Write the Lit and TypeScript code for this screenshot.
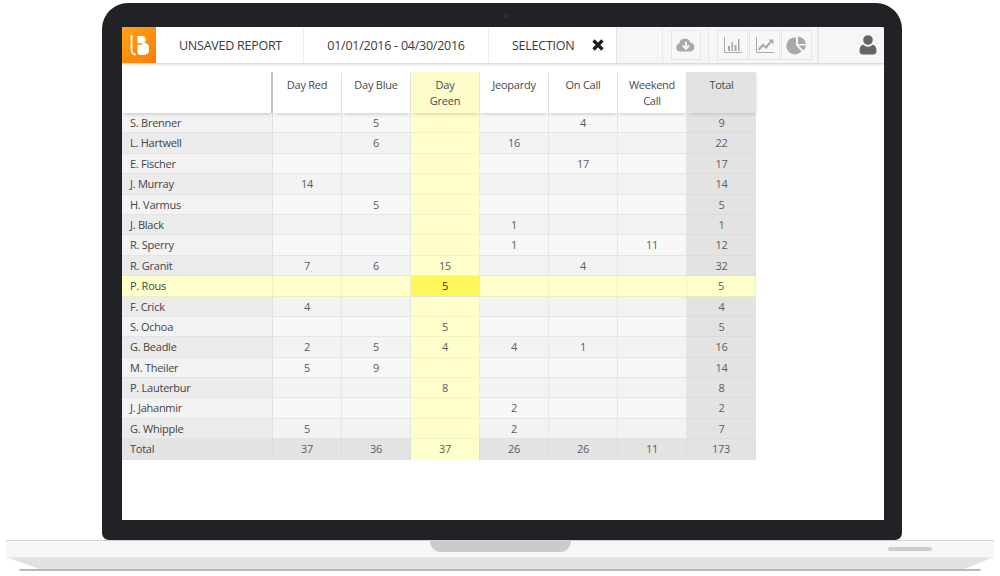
import { LitElement, html, css, svg } from "lit";
import { customElement } from "lit/decorators.js";

const COLS = ["Day Red", "Day Blue", "Day Green", "Jeopardy", "On Call", "Weekend Call"];
type Row = [string, ...(number | null)[]];
const ROWS: Row[] = [
  ["S. Brenner", null, 5, null, null, 4, null, 9],
  ["L. Hartwell", null, 6, null, 16, null, null, 22],
  ["E. Fischer", null, null, null, null, 17, null, 17],
  ["J. Murray", 14, null, null, null, null, null, 14],
  ["H. Varmus", null, 5, null, null, null, null, 5],
  ["J. Black", null, null, null, 1, null, null, 1],
  ["R. Sperry", null, null, null, 1, null, 11, 12],
  ["R. Granit", 7, 6, 15, null, 4, null, 32],
  ["P. Rous", null, null, 5, null, null, null, 5],
  ["F. Crick", 4, null, null, null, null, null, 4],
  ["S. Ochoa", null, null, 5, null, null, null, 5],
  ["G. Beadle", 2, 5, 4, 4, 1, null, 16],
  ["M. Theiler", 5, 9, null, null, null, null, 14],
  ["P. Lauterbur", null, null, 8, null, null, null, 8],
  ["J. Jahanmir", null, null, null, 2, null, null, 2],
  ["G. Whipple", 5, null, null, 2, null, null, 7],
];
const TOTALS = [37, 36, 37, 26, 26, 11, 173];

@customElement("app-root")
export class AppRoot extends LitElement {
  static styles = css`
    :host { display: block; width: 1000px; height: 576px; background: #fff; overflow: hidden;
      font-family: "Open Sans", sans-serif; color: #555; }
    .lid { box-sizing: border-box; width: 800px; height: 537px; margin: 3px 0 0 102px; background: #212226;
      border-radius: 26px 26px 7px 7px; padding: 24px 18px 20px 20px; position: relative; }
    .cam { position: absolute; left: 401px; top: 10px; width: 5px; height: 5px; border-radius: 50%; background: #2c2d32; }
    .screen { height: 493px; background: #fff; border-radius: 2px 2px 0 0; overflow: hidden; }
    .bar { display: flex; height: 36px; background: #f6f6f6; box-shadow: 0 1px 3px rgba(0,0,0,.22); position: relative; }
    .logo { width: 34px; height: 36px; background: linear-gradient(135deg, #ffa31a, #fb7d00); display: flex; align-items: center; justify-content: center; }
    .seg { display: flex; align-items: center; background: #fff; font-size: 12.5px; letter-spacing: -0.25px; color: #3a3a3a; border-right: 1px solid #ececec; box-sizing: border-box; }
    .s1 { width: 148px; padding-left: 23px; }
    .s2 { width: 185px; justify-content: center; }
    .s3 { width: 128px; padding-left: 23px; gap: 18px; border-right: 1px solid #e2e2e2; }
    .gap1 { width: 46px; border-right: 1px solid #e8e8e8; box-sizing: border-box; }
    .g2 { width: 46px; box-sizing: border-box; border-right: 1px solid #e8e8e8; display: flex; align-items: center; justify-content: center; }
    .g3 { width: 110px; box-sizing: border-box; border-right: 2px solid #e8e8e8; display: flex; align-items: center; padding-left: 8px; gap: 1px; }
    .g3 .ib { width: 31px; }
    .user { flex: 1; display: flex; align-items: center; justify-content: flex-end; padding-right: 7px; }
    .ib { width: 30px; height: 30px; box-sizing: border-box; border: 1px solid #e6e6e6; background: #f7f7f7; display: flex; align-items: center; justify-content: center; }
    .table { width: 634px; margin-top: 9px; display: grid; grid-template-columns: 151px repeat(5, 69px) 69px 69px;
      grid-template-rows: 41px repeat(17, 20.4px); font-size: 11px; letter-spacing: -0.25px; position: relative; }
    .h { background: #fff; text-align: center; padding: 5px 10px 0; line-height: 16px; box-sizing: border-box; color: #4a4a4a;
      border-right: 1px solid #e4e4e4; box-shadow: 0 3px 4px -2px rgba(0,0,0,.2); position: relative; z-index: 1; }
    .h0 { border-right: 2px solid #c6c6c6; }
    .hy { background: #fdfdcc; border-right: 1px solid #eeeec8; }
    .ht { background: #e3e3e3; border-right: 0; box-shadow: 1px 2px 4px -1px rgba(0,0,0,.16); }
    .c { box-sizing: border-box; text-align: center; line-height: 20px; border-right: 1px solid #e6e6e6; border-bottom: 1px solid #e4e4e4; background: #f8f8f8; color: #5c5c5c; }
    .odd { background: #f3f3f3; }
    .n { text-align: left; padding-left: 8px; background: #f3f3f3; color: #444; border-right-color: #e0e0e0; }
    .n.odd { background: #ebebeb; }
    .y { background: #ffffcc; border-right-color: #f0f0c8; border-bottom-color: #f3f3c8; }
    .hl { background: #ffffcc; border-right-color: #f1f1c4; border-bottom-color: #eeeec0; }
    .mark { background: #fef65a; color: #333; }
    .t { background: #e3e3e3; border-right: 0; border-bottom-color: #dcdcdc; }
    .foot { background: #e3e3e3; border-right-color: #dcdcdc; border-bottom: 0; }
    .foot.y { background: #ffffcc; }
    .base { margin: 0 6px; height: 33px; position: relative; }
    .top { height: 17px; box-sizing: border-box; background: #f5f6f8; border-top: 1px solid #d4d4d6; display: flex; justify-content: space-between; }
    .notch { width: 141px; height: 11px; margin-left: 424px; background: #cbcbcb; border-radius: 0 0 12px 12px; }
    .slot { width: 44px; height: 4px; margin: 6px 62px 0 0; border-radius: 2px; background: #cdcdcd; }
    .low { height: 12px; background: #e0e1e3; border-top: 1px solid #e9eaec; box-sizing: border-box;
      clip-path: polygon(0 0, 100% 0, 97% 100%, 3.4% 100%); }
    .sh { height: 2px; margin: 0 13px; background: #b9b9b9; border-radius: 0 0 2px 2px; }
  `;

  private ico(body: unknown, w = 22, h = 20) {
    return html`<svg width=${w} height=${h} viewBox="0 0 22 20">${body}</svg>`;
  }

  render() {
    const gray = "#a9a9a9";
    return html`
      <div class="lid">
        <div class="cam"></div>
        <div class="screen">
          <div class="bar">
            <div class="logo">
              <svg width="19" height="21" viewBox="0 0 19 21" aria-hidden="true">
                <path d="M1.500 1v13c0 3 1 5 3.500 5.500" fill="none" stroke="#fff" stroke-width="1.800" stroke-linecap="round" />
                <path d="M7.500 1h3.500a3.800 3.800 0 0 1 3.300 6.700a5.200 5.200 0 0 1-1.300 12.300h-2.500c-2 0-3-1.500-3-4z" fill="#fff" />
                <path d="M6.500 9h5.500" stroke="#fb8a08" stroke-width="1.600" />
              </svg>
            </div>
            <div class="seg s1">UNSAVED REPORT</div>
            <div class="seg s2">01/01/2016 - 04/30/2016</div>
            <div class="seg s3">SELECTION
              <svg width="12" height="12" viewBox="0 0 12 12"><path d="M1.500 1.500l9 9M10.500 1.500l-9 9" stroke="#1c1c1c" stroke-width="3.200" /></svg>
            </div>
            <div class="gap1"></div>
            <div class="g2"><div class="ib">${this.ico(svg`
              <path d="M5 16.500a4 4 0 0 1-.6-7.900a4.500 4.500 0 0 1 5-4.800a5.500 5.500 0 0 1 6 3.700a4.600 4.600 0 0 1 .5 9z" fill=${gray} />
              <path d="M11 7v5M7.800 10.500l3.200 3.400 3.200-3.400" fill="none" stroke="#f7f7f7" stroke-width="2" />`)}</div></div>
            <div class="g3">
              <div class="ib">${this.ico(svg`
                <path d="M2.500 2v15.500H20" fill="none" stroke=${gray} stroke-width="1" />
                <path d="M6 11h2v5H6zM9.500 7h1.500v9H9.500zM12.500 10h2v6h-2zM16 4h1.500v12H16z" fill=${gray} />`)}</div>
              <div class="ib">${this.ico(svg`
                <path d="M2.500 2v15.500H20" fill="none" stroke=${gray} stroke-width="1" />
                <path d="M4.500 15l4.500-5 3 2.500 5-6" fill="none" stroke=${gray} stroke-width="2" />
                <path d="M14.500 4.500h5v5z" fill=${gray} />`)}</div>
              <div class="ib">${this.ico(svg`
                <path d="M10 2.500v8l5.500 5.800A8.500 8.500 0 1 1 10 2.500z" fill=${gray} />
                <path d="M12 1.500a8.500 8.500 0 0 1 8 7.500h-8z" fill=${gray} />
                <path d="M12.500 10.500h7.500a8.500 8.500 0 0 1-2.400 5z" fill=${gray} />`)}</div>
            </div>
            <div class="user">
              <svg width="18" height="20" viewBox="0 0 18 20">
                <circle cx="9" cy="5" r="4.800" fill="#666" />
                <path d="M0.500 16c0-4 1.500-6 4-6.300c1 1.300 2.700 2 4.500 2s3.500-.7 4.500-2c2.500.3 4 2.300 4 6.300c0 2.500-1.500 3.500-3.500 3.500H4c-2 0-3.500-1-3.500-3.500z" fill="#666" />
              </svg>
            </div>
          </div>
          <div class="table">
            <div class="h h0"></div>
            ${COLS.map((c, i) => html`<div class="h ${i === 2 ? "hy" : ""}">${c}</div>`)}
            <div class="h ht">Total</div>
            ${ROWS.map((r, ri) => {
              const odd = ri % 2 === 1 ? "odd" : "";
              const hl = ri === 8;
              return html`
                <div class="c n ${odd} ${hl ? "hl" : ""}">${r[0]}</div>
                ${r.slice(1).map((v, ci) => {
                  const cls = ci === 6 ? (hl ? "hl" : "t") : hl ? (ci === 2 ? "mark" : "hl") : ci === 2 ? "y" : odd;
                  return html`<div class="c ${cls}">${v ?? ""}</div>`;
                })}`;
            })}
            <div class="c n foot">Total</div>
            ${TOTALS.map((v, i) => html`<div class="c foot ${i === 2 ? "y" : ""}">${v}</div>`)}
          </div>
        </div>
      </div>
      <div class="base">
        <div class="top"><div class="notch"></div><div class="slot"></div></div>
        <div class="low"></div>
        <div class="sh"></div>
      </div>
    `;
  }
}
